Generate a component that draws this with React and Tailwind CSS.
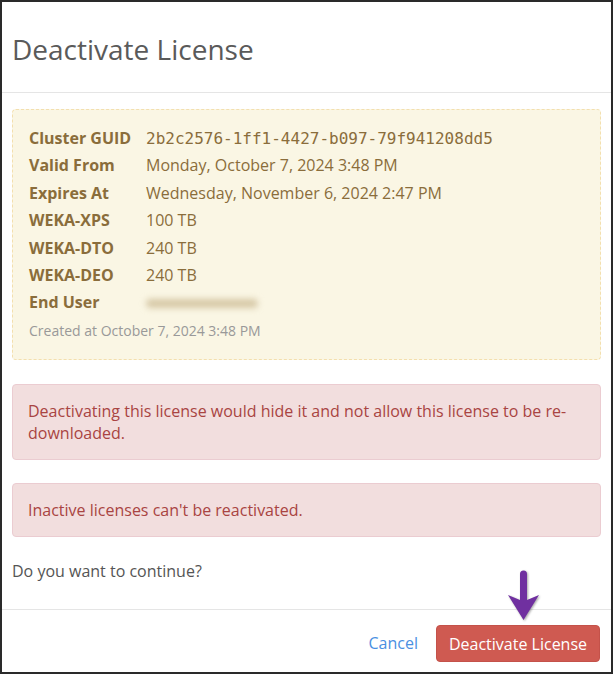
import React from 'react'

const rows = [
  { label: 'Cluster GUID', value: '2b2c2576-1ff1-4427-b097-79f941208dd5', mono: true },
  { label: 'Valid From', value: 'Monday, October 7, 2024 3:48 PM' },
  { label: 'Expires At', value: 'Wednesday, November 6, 2024 2:47 PM' },
  { label: 'WEKA-XPS', value: '100 TB' },
  { label: 'WEKA-DTO', value: '240 TB' },
  { label: 'WEKA-DEO', value: '240 TB' },
]

const font = { fontFamily: '"Open Sans", "Noto Sans", sans-serif' }

const App = () => {
  return (
    <div
      className="relative w-[613px] h-[674px] border-2 border-[#2a2a2a] bg-white flex flex-col text-[#555]"
      style={font}
    >
      {/* Header */}
      <div className="pl-[10px] pt-[29px] pb-[25px] border-b border-[#e5e5e5]">
        <h1 className="text-[28px] leading-[36px] font-normal text-[#5a5a5a]">Deactivate License</h1>
      </div>

      {/* Body */}
      <div className="px-[10px] pt-[16px] flex-1">
        <div className="rounded-[4px] border border-dashed border-[#f3dfae] bg-[#faf6e4] pl-[16px] pt-[15px] pb-[15px] text-[#8a6d3b]">
          {rows.map(r => (
            <div key={r.label} className="flex leading-[27.4px] text-[16px]">
              <span className="w-[117px] shrink-0 font-bold">{r.label}</span>
              <span style={r.mono ? { fontFamily: '"DejaVu Sans Mono", monospace' } : undefined}>
                {r.value}
              </span>
            </div>
          ))}
          <div className="flex leading-[27.4px] text-[16px]">
            <span className="w-[117px] shrink-0 font-bold">End User</span>
            <span className="flex items-center">
              <span className="block w-[112px] h-[9px] rounded-full bg-[#d6c8a6] blur-[3px]"></span>
            </span>
          </div>
          <div className="leading-[27.4px] text-[14px] text-[#999]">Created at October 7, 2024 3:48 PM</div>
        </div>

        <div className="mt-[24px] rounded-[4px] border border-[#ebccd1] bg-[#f2dede] px-[15px] py-[15px] text-[16px] leading-[22px] text-[#a94442]">
          Deactivating this license would hide it and not allow this license to be re-downloaded.
        </div>

        <div className="mt-[23px] rounded-[4px] border border-[#ebccd1] bg-[#f2dede] px-[15px] py-[15px] text-[16px] leading-[22px] text-[#a94442]">
          Inactive licenses can't be reactivated.
        </div>

        <p className="mt-[23px] text-[16px] leading-[22px] text-[#555]">Do you want to continue?</p>
      </div>

      {/* Footer */}
      <div className="h-[63px] border-t border-[#e5e5e5] flex items-start justify-end pt-[15px] pr-[11px] gap-[18px]">
        <button className="text-[16px] leading-[37px] text-[#4a90e2]">Cancel</button>
        <button className="h-[37px] w-[164px] rounded-[4px] bg-[#cf5a51] border border-[#c4524a] text-white text-[16px]">
          Deactivate License
        </button>
      </div>

      {/* Annotation arrow */}
      <svg
        className="absolute left-[502px] top-[566px]"
        width="40"
        height="56"
        viewBox="0 0 40 56"
      >
        <g style={{ filter: 'drop-shadow(1px 1px 1px rgba(0,0,0,0.35))' }}>
          <path
            d="M16 6 a3.5 3.5 0 0 1 7 0 V32 L35 27 L19.5 52 L4 27 L16 32 Z"
            fill="#7030a0"
          />
        </g>
      </svg>
    </div>
  )
}

export default App
